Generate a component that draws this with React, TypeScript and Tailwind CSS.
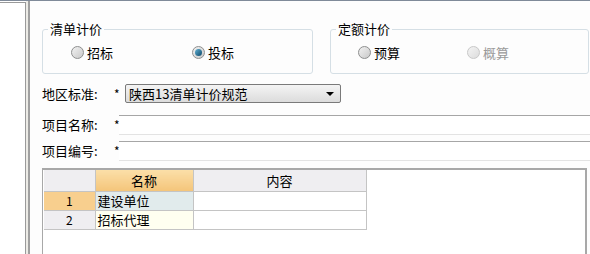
import React from 'react';

const font = { fontFamily: '"Noto Sans CJK SC", "Liberation Sans", sans-serif' };

function Radio({ checked, disabled }: { checked?: boolean; disabled?: boolean }) {
    return (
        <span
            className={`relative inline-flex h-[13px] w-[13px] items-center justify-center rounded-full border ${
                disabled ? 'border-[#c8c8c8] bg-gradient-to-br from-[#f4f4f4] to-[#dcdcdc]' : 'border-[#8e8f8f] bg-gradient-to-br from-[#f2f2f2] to-[#c9c9c9]'
            }`}
        >
            {checked && <span className="h-[7px] w-[7px] rounded-full bg-gradient-to-br from-[#5fb0d4] to-[#0d4a6a]" />}
        </span>
    );
}

function Group({ title, width, children }: { title: string; width: string; children: React.ReactNode }) {
    return (
        <fieldset className={`${width} h-[53px] rounded-[3px] border border-[#d5dfe5] px-0 pb-0 pt-0`}>
            <legend className="ml-[5px] px-[2px] text-[13px] leading-[16px] text-black">{title}</legend>
            <div className="flex h-[31px] items-center">{children}</div>
        </fieldset>
    );
}

function Option({ label, checked, disabled, w }: { label: string; checked?: boolean; disabled?: boolean; w: string }) {
    return (
        <div className={`flex ${w} items-center gap-[3px]`}>
            <Radio checked={checked} disabled={disabled} />
            <span className={`text-[13px] leading-none ${disabled ? 'text-[#9a9a9a]' : 'text-black'}`}>{label}</span>
        </div>
    );
}

export default function App() {
    return (
        <div className="flex h-[254px] w-[590px] flex-col overflow-hidden bg-white" style={font}>
            <div className="h-[9px] border-b border-[#7f8a99] bg-gradient-to-b from-[#c9d6e8] to-[#9fb2cf]" />
            <div className="flex flex-1">
                <div className="mt-[1px] w-[26px] border-r border-t border-[#9a9a9a] bg-white" />
                <div className="w-[4px] border-r-2 border-[#a0a0a0] bg-[#ecebe6]" />
                <div className="flex-1 bg-[#fdfdfd] pl-[12px] pt-[20px]">
                    <div className="flex gap-[17px]">
                        <Group title="清单计价" width="w-[271px]">
                            <div className="w-[28px]" />
                            <Option label="招标" w="w-[121px]" />
                            <Option label="投标" checked w="w-[60px]" />
                        </Group>
                        <Group title="定额计价" width="w-[259px]">
                            <div className="w-[27px]" />
                            <Option label="预算" w="w-[109px]" />
                            <Option label="概算" disabled w="w-[60px]" />
                        </Group>
                    </div>

                    <div className="mt-[10px] flex h-[19px] items-center text-[13px]">
                        <span className="w-[72px]">地区标准:</span>
                        <span className="w-[11px] text-[12px]">*</span>
                        <div className="flex h-[19px] w-[216px] items-center justify-between rounded-[2px] border border-[#7a7a7a] bg-gradient-to-b from-[#f4f4f4] to-[#dcdcdc] pl-[3px] pr-[6px]">
                            <span className="leading-none">陕西13清单计价规范</span>
                            <span className="h-0 w-0 border-x-[4px] border-t-[4px] border-x-transparent border-t-black" />
                        </div>
                    </div>

                    <div className="mt-[12px] flex h-[20px] items-center text-[13px]">
                        <span className="w-[72px]">项目名称:</span>
                        <span className="w-[5px] text-[12px]">*</span>
                        <div className="h-[20px] flex-1 border-b border-t border-b-[#e3e3e3] border-t-[#a6a6a6] bg-white" />
                    </div>

                    <div className="mt-[6px] flex h-[20px] items-center text-[13px]">
                        <span className="w-[72px]">项目编号:</span>
                        <span className="w-[5px] text-[12px]">*</span>
                        <div className="h-[20px] flex-1 border-b border-t border-b-[#e3e3e3] border-t-[#a6a6a6] bg-white" />
                    </div>

                    <div className="mt-[7px] h-[90px] w-[545px] border-l border-r-2 border-t-2 border-[#a8a8a8] bg-white pl-[1px]">
                        <table className="border-collapse text-[12px] leading-none">
                            <tbody>
                                <tr className="h-[21px]">
                                    <td className="w-[51px] border-b border-r border-[#c4c4c4] bg-[#efeef1]" />
                                    <td className="w-[98px] border-b border-r border-[#c4c4c4] bg-gradient-to-b from-[#fbdfa8] to-[#f4c57a] text-center text-[13px]">名称</td>
                                    <td className="w-[173px] border-b border-r border-[#c4c4c4] bg-[#efeef1] text-center text-[13px]">内容</td>
                                </tr>
                                <tr className="h-[19px]">
                                    <td className="border-b border-r border-[#c4c4c4] bg-[#f8cf8e] text-center">1</td>
                                    <td className="border-b border-r border-[#c4c4c4] bg-[#e1ebec] pl-[2px] text-[13px]">建设单位</td>
                                    <td className="border-b border-r border-[#c4c4c4] bg-white" />
                                </tr>
                                <tr className="h-[19px]">
                                    <td className="border-b border-r border-[#c4c4c4] bg-[#efeef1] text-center">2</td>
                                    <td className="border-b border-r border-[#c4c4c4] bg-[#fffff0] pl-[2px] text-[13px]">招标代理</td>
                                    <td className="border-b border-r border-[#c4c4c4] bg-white" />
                                </tr>
                            </tbody>
                        </table>
                    </div>
                </div>
            </div>
        </div>
    );
}
